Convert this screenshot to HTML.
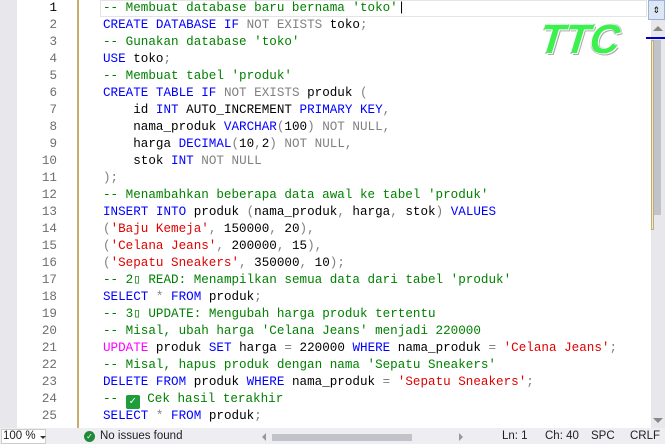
<!DOCTYPE html>
<html><head><meta charset="utf-8"><style>
html,body{margin:0;padding:0;width:665px;height:444px;overflow:hidden;background:#fff;font-family:"Liberation Mono","DejaVu Sans Mono",monospace;}
#strip{position:absolute;left:0;top:0;width:17px;height:428px;background:#e8e8ec;}
.n{position:absolute;left:17px;width:40px;text-align:right;color:#6e6e6e;font-size:12.6px;line-height:17px;height:17px;}
.n.a{color:#000;}
#yl{position:absolute;left:77px;top:0;width:2px;height:428px;background:#c8ad6a;}
#hl{position:absolute;left:100px;top:0;width:545px;height:15px;border:1px solid #e4e4e4;}
.l{position:absolute;left:103px;font-size:12.6px;line-height:17px;height:17px;white-space:pre;color:#000;}
.k{color:#0000ff}.g{color:#808080}.c{color:#008000}.s{color:#e00000}.m{color:#ff00ff}
#sb{position:absolute;left:651px;top:0;width:14px;height:428px;background:#e8e8ec;}
#status{position:absolute;left:0;top:428px;width:665px;height:16px;background:#eeeef2;font-family:"Liberation Sans",sans-serif;font-size:11.5px;color:#1e1e1e;}
#status span{position:absolute;top:2px;}
</style></head><body>
<div id="strip"></div>
<div id="yl"></div>
<div id="hl"></div>
<div class="n a" style="top:0">1</div><div class="n" style="top:17px">2</div><div class="n" style="top:34px">3</div><div class="n" style="top:51px">4</div><div class="n" style="top:68px">5</div><div class="n" style="top:85px">6</div><div class="n" style="top:102px">7</div><div class="n" style="top:119px">8</div><div class="n" style="top:136px">9</div><div class="n" style="top:153px">10</div><div class="n" style="top:170px">11</div><div class="n" style="top:187px">12</div><div class="n" style="top:204px">13</div><div class="n" style="top:221px">14</div><div class="n" style="top:238px">15</div><div class="n" style="top:255px">16</div><div class="n" style="top:272px">17</div><div class="n" style="top:289px">18</div><div class="n" style="top:306px">19</div><div class="n" style="top:323px">20</div><div class="n" style="top:340px">21</div><div class="n" style="top:357px">22</div><div class="n" style="top:374px">23</div><div class="n" style="top:391px">24</div><div class="n" style="top:408px">25</div>

<div class="l c" style="top:0">-- Membuat database baru bernama 'toko'<span style="color:#000">|</span></div>
<div class="l" style="top:17px"><span class="k">CREATE DATABASE IF</span> <span class="g">NOT EXISTS</span> toko<span class="g">;</span></div>
<div class="l c" style="top:34px">-- Gunakan database 'toko'</div>
<div class="l" style="top:51px"><span class="k">USE</span> toko<span class="g">;</span></div>
<div class="l c" style="top:68px">-- Membuat tabel 'produk'</div>
<div class="l" style="top:85px"><span class="k">CREATE TABLE IF</span> <span class="g">NOT EXISTS</span> produk <span class="g">(</span></div>
<div class="l" style="top:102px">    id <span class="k">INT</span> AUTO_INCREMENT <span class="k">PRIMARY KEY</span><span class="g">,</span></div>
<div class="l" style="top:119px">    nama_produk <span class="k">VARCHAR</span><span class="g">(</span>100<span class="g">) NOT NULL,</span></div>
<div class="l" style="top:136px">    harga <span class="k">DECIMAL</span><span class="g">(</span>10<span class="g">,</span>2<span class="g">) NOT NULL,</span></div>
<div class="l" style="top:153px">    stok <span class="k">INT</span> <span class="g">NOT NULL</span></div>
<div class="l g" style="top:170px">);</div>
<div class="l c" style="top:187px">-- Menambahkan beberapa data awal ke tabel 'produk'</div>
<div class="l" style="top:204px"><span class="k">INSERT INTO</span> produk <span class="g">(</span>nama_produk<span class="g">,</span> harga<span class="g">,</span> stok<span class="g">)</span> <span class="k">VALUES</span></div>
<div class="l" style="top:221px"><span class="g">(</span><span class="s">'Baju Kemeja'</span><span class="g">,</span> 150000<span class="g">,</span> 20<span class="g">),</span></div>
<div class="l" style="top:238px"><span class="g">(</span><span class="s">'Celana Jeans'</span><span class="g">,</span> 200000<span class="g">,</span> 15<span class="g">),</span></div>
<div class="l" style="top:255px"><span class="g">(</span><span class="s">'Sepatu Sneakers'</span><span class="g">,</span> 350000<span class="g">,</span> 10<span class="g">);</span></div>
<div class="l c" style="top:272px">-- 2▯ READ: Menampilkan semua data dari tabel 'produk'</div>
<div class="l" style="top:289px"><span class="k">SELECT</span> <span class="g">*</span> <span class="k">FROM</span> produk<span class="g">;</span></div>
<div class="l c" style="top:306px">-- 3▯ UPDATE: Mengubah harga produk tertentu</div>
<div class="l c" style="top:323px">-- Misal, ubah harga 'Celana Jeans' menjadi 220000</div>
<div class="l" style="top:340px"><span class="m">UPDATE</span> produk <span class="k">SET</span> harga <span class="g">=</span> 220000 <span class="k">WHERE</span> nama_produk <span class="g">=</span> <span class="s">'Celana Jeans'</span><span class="g">;</span></div>
<div class="l c" style="top:357px">-- Misal, hapus produk dengan nama 'Sepatu Sneakers'</div>
<div class="l" style="top:374px"><span class="k">DELETE FROM</span> produk <span class="k">WHERE</span> nama_produk <span class="g">=</span> <span class="s">'Sepatu Sneakers'</span><span class="g">;</span></div>
<div class="l c" style="top:391px">-- <span style="display:inline-block;width:14px;height:14px;background:#1e9e3a;border-radius:2px;color:#fff;font-size:11px;line-height:14px;text-align:center;vertical-align:-2px;">✓</span> Cek hasil terakhir</div>
<div class="l" style="top:408px"><span class="k">SELECT</span> <span class="g">*</span> <span class="k">FROM</span> produk<span class="g">;</span></div>

<div style="position:absolute;left:540px;top:17px;font-family:'Liberation Sans',sans-serif;font-weight:bold;font-style:italic;font-size:41px;line-height:44px;color:#3cf050;letter-spacing:0px;text-shadow:1px 1px 0 #fff,-1px -1px 0 #fff,2px 2px 0 #aaa,-1px 1px 0 #ccc,1px -1px 0 #ccc;transform:skewX(-6deg);">TTC</div>

<div id="sb"></div>
<div style="position:absolute;left:648px;top:0;width:17px;height:20px;background:#dde6f5;border:1px solid #99b4d8;box-sizing:border-box;text-align:center;font-size:12px;line-height:18px;">⇕</div>
<div style="position:absolute;left:651px;top:26px;width:0;height:0;border-left:5px solid transparent;border-right:5px solid transparent;border-bottom:5px solid #888;margin-left:2px;"></div>
<div style="position:absolute;left:646px;top:37px;width:19px;height:2px;background:#0000cc;"></div>
<div style="position:absolute;left:653px;top:40px;width:8px;height:175px;background:#c2c3c9;"></div>
<div style="position:absolute;left:651px;top:40px;width:3px;height:190px;border:1px solid #c8ad6a;box-sizing:border-box;"></div>
<div style="position:absolute;left:653px;top:418px;width:0;height:0;border-left:5px solid transparent;border-right:5px solid transparent;border-top:5px solid #888;"></div>

<div id="status">
<div style="position:absolute;left:1px;top:1px;width:45px;height:15px;background:#fff;border:1px solid #ccc;box-sizing:border-box;"></div>
<span style="left:3px">100 %</span>
<div style="position:absolute;left:40px;top:8px;border-left:3px solid transparent;border-right:3px solid transparent;border-top:3px solid #333;"></div>
<div style="position:absolute;left:84px;top:3px;width:11px;height:11px;border-radius:50%;background:#1e8a3a;color:#fff;font-size:8px;line-height:11px;text-align:center;">✓</div>
<span style="left:100px">No issues found</span>
<div style="position:absolute;left:262px;top:5px;border-top:4px solid transparent;border-bottom:4px solid transparent;border-right:4px solid #999;"></div>
<div style="position:absolute;left:272px;top:6px;width:140px;height:7px;background:#c2c3c9;"></div>
<div style="position:absolute;left:459px;top:5px;border-top:4px solid transparent;border-bottom:4px solid transparent;border-left:4px solid #999;"></div>
<span style="left:502px">Ln: 1</span>
<span style="left:545px">Ch: 40</span>
<span style="left:591px">SPC</span>
<span style="left:630px">CRLF</span>
</div>
</body></html>
